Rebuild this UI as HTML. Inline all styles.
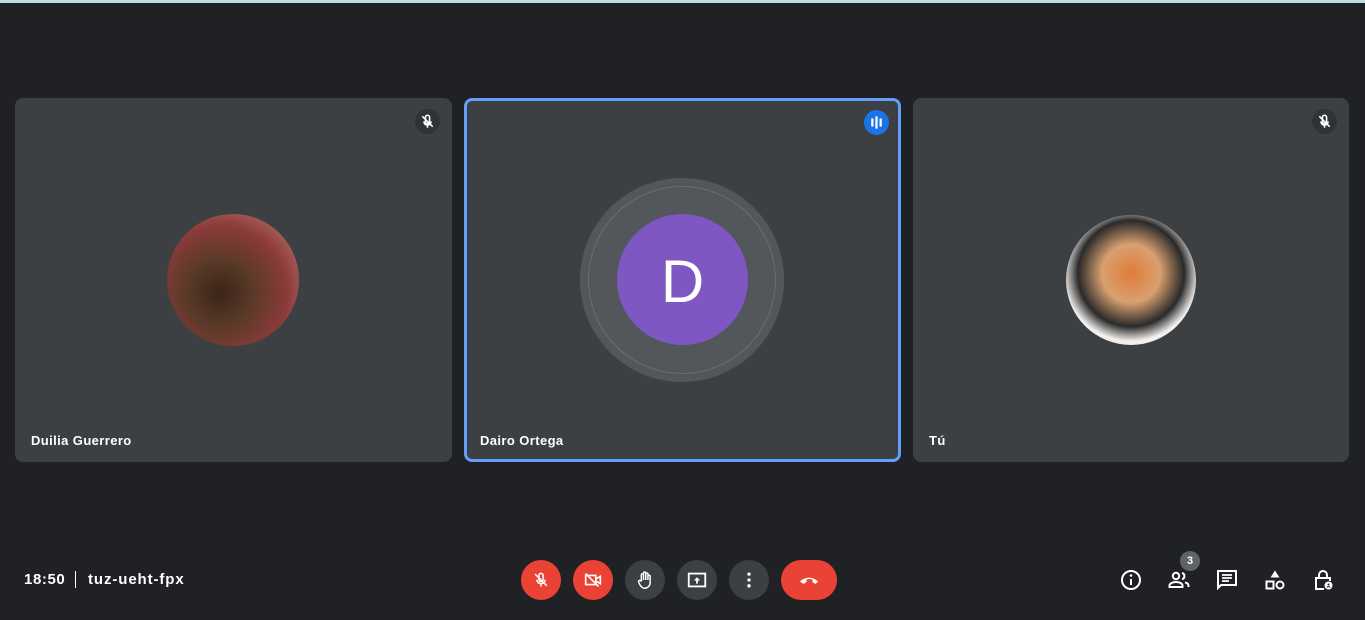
<!DOCTYPE html>
<html><head><meta charset="utf-8"><style>
*{margin:0;padding:0;box-sizing:border-box}
body{width:1365px;height:620px;background:#202124;position:relative;overflow:hidden;font-family:"Liberation Sans",sans-serif;color:#fff}
.top{position:absolute;left:0;top:0;width:1365px;height:3px;background:#b9dfe2}
.tile{position:absolute;top:98px;height:364px;background:#3c4043;border-radius:8px}
.name{position:absolute;left:16px;bottom:14px;font-size:13px;font-weight:bold;letter-spacing:0.4px}
.mic{position:absolute;top:11px;right:12px;width:25px;height:25px;border-radius:50%;background:#303336}
.circ{position:absolute;border-radius:50%}
.btn{position:absolute;top:560px;width:40px;height:40px;border-radius:20px;background:#3c4043;display:flex;align-items:center;justify-content:center}
.red{background:#ea4335}
.ic{position:absolute;top:568px;width:24px;height:24px}
</style></head><body>
<div class="top"></div>

<div class="tile" style="left:15px;width:437px">
 <div class="mic"><svg width="25" height="25" viewBox="0 0 24 24"><path d="M12 6a2 2 0 0 1 2 2v4a2 2 0 0 1-4 0V8a2 2 0 0 1 2-2zM8.5 12a3.5 3.5 0 0 0 7 0M12 15.5V18" stroke="#fff" stroke-width="1.5" fill="none"/><path d="M7 7l10 10" stroke="#fff" stroke-width="1.5"/></svg></div>
 <div class="circ" style="left:152px;top:116px;width:132px;height:132px;background:radial-gradient(circle at 40% 60%,#3a2418 0,#5a3a28 30%,#8b3a3a 60%,#c98a7a 100%)"></div>
 <div class="name">Duilia Guerrero</div>
</div>

<div class="tile" style="left:464px;width:437px;border:3px solid #669df6">
 <div class="mic" style="background:#1a73e8;top:9px;right:9px"><svg width="25" height="25" viewBox="0 0 24 24"><path d="M8 9v6M12 7v10M16 9v6" stroke="#fff" stroke-width="2.2" stroke-linecap="round"/></svg></div>
 <div class="circ" style="left:113px;top:77px;width:204px;height:204px;background:#53575b"></div>
 <div class="circ" style="left:121px;top:85px;width:188px;height:188px;border:1px solid #6a6e72"></div>
 <div class="circ" style="left:150px;top:113px;width:131px;height:131px;background:#7e57c2;display:flex;align-items:center;justify-content:center;font-size:60px;font-weight:300;padding-top:4px">D</div>
 <div class="name" style="left:13px;bottom:11px">Dairo Ortega</div>
</div>

<div class="tile" style="left:913px;width:436px">
 <div class="mic"><svg width="25" height="25" viewBox="0 0 24 24"><path d="M12 6a2 2 0 0 1 2 2v4a2 2 0 0 1-4 0V8a2 2 0 0 1 2-2zM8.5 12a3.5 3.5 0 0 0 7 0M12 15.5V18" stroke="#fff" stroke-width="1.5" fill="none"/><path d="M7 7l10 10" stroke="#fff" stroke-width="1.5"/></svg></div>
 <div class="circ" style="left:153px;top:117px;width:130px;height:130px;background:radial-gradient(circle at 50% 45%,#e07b39 0,#d9a070 30%,#2a2a2a 55%,#f2f0ee 70%)"></div>
 <div class="name">Tú</div>
</div>

<div style="position:absolute;left:24px;top:571px;font-size:15px;font-weight:bold;letter-spacing:0.6px">18:50</div>
<div style="position:absolute;left:75px;top:571px;width:1px;height:17px;background:#fff"></div>
<div style="position:absolute;left:88px;top:571px;font-size:15px;font-weight:bold;letter-spacing:0.9px">tuz-ueht-fpx</div>

<div class="btn red" style="left:521px"><svg width="20" height="20" viewBox="0 0 24 24"><path d="M12 4a2.5 2.5 0 0 1 2.5 2.5v5a2.5 2.5 0 0 1-5 0v-5A2.5 2.5 0 0 1 12 4zM7 11.5a5 5 0 0 0 10 0M12 16.5V20" stroke="#fff" stroke-width="1.8" fill="none"/><path d="M5 5l14 14" stroke="#fff" stroke-width="1.8"/></svg></div>
<div class="btn red" style="left:573px"><svg width="22" height="22" viewBox="0 0 24 24"><path d="M4 7h11v10H4zM15 11l5-3v8l-5-3" stroke="#fff" stroke-width="1.8" fill="none"/><path d="M4 5l14 14" stroke="#fff" stroke-width="1.8"/></svg></div>
<div class="btn" style="left:625px"><svg width="22" height="22" viewBox="0 0 24 24"><path d="M8 13V6.5a1.2 1.2 0 0 1 2.4 0V12V4.5a1.2 1.2 0 0 1 2.4 0V12V5.5a1.2 1.2 0 0 1 2.4 0V12V8a1.2 1.2 0 0 1 2.4 0v7a6 6 0 0 1-6 6c-2.5 0-3.6-1.3-5-3.5L5 14a1.2 1.2 0 0 1 2-1.2z" stroke="#fff" stroke-width="1.6" fill="none"/></svg></div>
<div class="btn" style="left:677px"><svg width="22" height="22" viewBox="0 0 24 24"><rect x="3" y="5" width="18" height="14" stroke="#fff" stroke-width="2" fill="none"/><path d="M12 9l-3.5 3.5h2.5V16h2v-3.5h2.5z" fill="#fff"/></svg></div>
<div class="btn" style="left:729px"><svg width="20" height="20" viewBox="0 0 24 24"><circle cx="12" cy="5" r="2" fill="#fff"/><circle cx="12" cy="12" r="2" fill="#fff"/><circle cx="12" cy="19" r="2" fill="#fff"/></svg></div>
<div class="btn red" style="left:781px;width:56px"><svg width="24" height="24" viewBox="0 0 24 24"><path d="M3 13.5c5-5 13-5 18 0l-2.5 2.5-3-2v-2.5c-2-.7-4-.7-6 0V14l-3 2z" fill="#fff"/></svg></div>

<svg class="ic" style="left:1119px" viewBox="0 0 24 24"><circle cx="12" cy="12" r="9" stroke="#fff" stroke-width="2" fill="none"/><path d="M12 11v6" stroke="#fff" stroke-width="2"/><circle cx="12" cy="7.5" r="1.3" fill="#fff"/></svg>
<div style="position:absolute;left:1180px;top:551px;width:20px;height:20px;border-radius:50%;background:#5f6368;font-size:11px;font-weight:bold;text-align:center;line-height:20px">3</div>
<svg class="ic" style="left:1167px" viewBox="0 0 24 24"><circle cx="9" cy="8" r="3.2" stroke="#fff" stroke-width="2" fill="none"/><path d="M2.5 19v-1.5c0-2 3-3.5 6.5-3.5s6.5 1.5 6.5 3.5V19z" stroke="#fff" stroke-width="2" fill="none"/><path d="M15 5a3.2 3.2 0 0 1 0 6.2M18 14.3c2 .6 3.5 1.7 3.5 3.2V19" stroke="#fff" stroke-width="2" fill="none"/></svg>
<svg class="ic" style="left:1215px" viewBox="0 0 24 24"><path d="M3 3h18v14H6l-3 3z" stroke="#fff" stroke-width="2" fill="none"/><path d="M7 7h10M7 10h10M7 13h7" stroke="#fff" stroke-width="1.8"/></svg>
<svg class="ic" style="left:1263px" viewBox="0 0 24 24"><path d="M12 2.5l4.5 7h-9z" fill="#fff"/><rect x="3.5" y="13.5" width="7" height="7" stroke="#fff" stroke-width="2" fill="none"/><circle cx="17" cy="17" r="3.5" stroke="#fff" stroke-width="2" fill="none"/></svg>
<svg class="ic" style="left:1311px" viewBox="0 0 24 24"><path d="M8 10V7a4 4 0 0 1 8 0v3" stroke="#fff" stroke-width="2" fill="none"/><path d="M13 21H5V10h14v3" stroke="#fff" stroke-width="2" fill="none"/><circle cx="17.5" cy="17.5" r="4" fill="#fff"/><circle cx="17.5" cy="16.5" r="1" fill="#202124"/><path d="M15.8 19.5a2 2 0 0 1 3.4 0" stroke="#202124" stroke-width="1" fill="none"/></svg>
</body></html>
